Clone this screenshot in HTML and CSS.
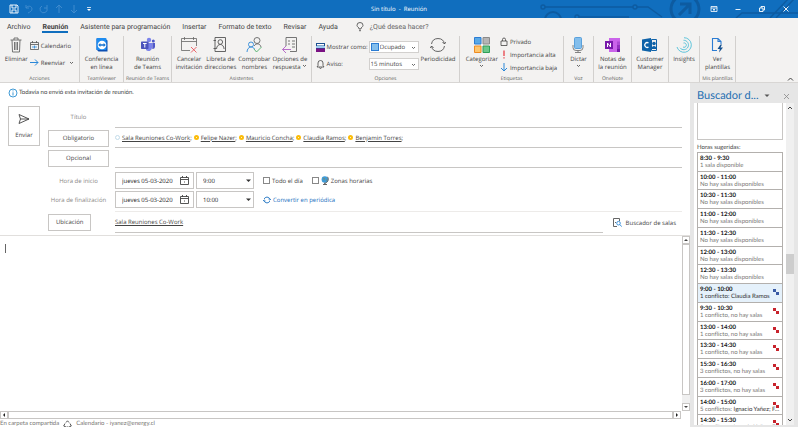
FILE: index.html
```html
<!DOCTYPE html>
<html lang="es">
<head>
  <meta charset="UTF-8">
  <title>Sin título - Reunión</title>
  <link rel="stylesheet" href="styles.css">
</head>
<body>
  <header class="titlebar">
    <svg class="circuit" width="268" height="18" viewBox="0 0 268 18" fill="none" stroke="#0b4a85" stroke-width="1.4">
      <circle cx="13" cy="7" r="2"/><path d="M15 7h88M107 7h11l14 10"/><circle cx="105" cy="7" r="2"/>
      <circle cx="23" cy="20" r="8" stroke-width="2"/><circle cx="47" cy="17" r="2"/><path d="M49 17h50"/>
      <circle cx="155" cy="9" r="14" stroke-width="3"/>
      <path d="M149 15l11-11M150 4h10v10" stroke-width="3"/>
      <path d="M206 18l6-5h60M240 18L258-1M246 18L264-1" />
    </svg>
    <div class="quick">
      <button title="Guardar"><svg width="10" height="10" viewBox="0 0 10 10" fill="none" stroke="#fff" stroke-width="0.9"><path d="M1 1h7l1 1v7H1zM3 1v3h4V1M3 9V6h4v3"/></svg></button>
      <button title="Deshacer"><svg width="10" height="10" viewBox="0 0 10 10" fill="none" stroke="#3f8bce"><path d="M2 1v3h3M2 4c2-3 6-2 6 1 0 2-2 3-4 4"/></svg></button>
      <button title="Rehacer"><svg width="10" height="10" viewBox="0 0 10 10" fill="none" stroke="#3f8bce"><path d="M8 1v3H5M8 4a3.6 3.6 0 1 1-5-2"/></svg></button>
      <button title="Anterior"><svg width="10" height="10" viewBox="0 0 10 10" fill="none" stroke="#3f8bce"><path d="M5 9V1M2 4l3-3 3 3"/></svg></button>
      <button title="Siguiente"><svg width="10" height="10" viewBox="0 0 10 10" fill="none" stroke="#3f8bce"><path d="M5 1v8M2 6l3 3 3-3"/></svg></button>
      <button title="Personalizar"><svg width="10" height="10" viewBox="0 0 10 10" fill="#fff"><path d="M3 3h4v.8H3zM3 5h4L5 7z"/></svg></button>
    </div>
    <div class="window-title">Sin título&nbsp; -&nbsp; Reunión</div>
    <div class="window-buttons">
      <button title="Opciones de cinta"><svg width="8" height="8" viewBox="0 0 8 8" fill="none" stroke="#fff" stroke-width="0.8"><path d="M1 1.5h6v5H1zM1 3h6M4 6V4M3 5l1-1 1 1"/></svg></button>
      <button title="Minimizar"><svg width="8" height="8" viewBox="0 0 8 8" stroke="#fff" stroke-width="0.9"><path d="M1.500 4.500h5"/></svg></button>
      <button title="Restaurar"><svg width="8" height="8" viewBox="0 0 8 8" fill="none" stroke="#fff" stroke-width="0.9"><path d="M1.500 3h3.500v3.500H1.500zM3 3V1.500h3.500V5H5"/></svg></button>
      <button title="Cerrar"><svg width="8" height="8" viewBox="0 0 8 8" stroke="#fff" stroke-width="0.9"><path d="M1.500 1.500l5 5M6.500 1.500l-5 5"/></svg></button>
    </div>
  </header>

  <nav class="tabs">
    <button>Archivo</button>
    <button class="active">Reunión</button>
    <button>Asistente para programación</button>
    <button>Insertar</button>
    <button>Formato de texto</button>
    <button>Revisar</button>
    <button>Ayuda</button>
    <button class="tell-me"><svg width="8" height="10" viewBox="0 0 8 10" fill="none" stroke="#444" stroke-width="0.8"><path d="M3 7V6C1.500 5 1 4 1 3.300a3 2.800 0 0 1 6 0C7 4 6.500 5 5 6v1zM3 8.700h2"/></svg>¿Qué desea hacer?</button>
  </nav>

  <section class="ribbon">
    <div class="group g-acciones">
      <div class="tools">
        <button class="big">
          <svg width="16" height="16" viewBox="0 0 16 16" fill="none" stroke="#666" stroke-width="0.9"><path d="M2.500 3h11M6 3V1h4v2M4 3l.5 12h7L12 3M6.500 5v8M8 5v8M9.500 5v8"/></svg>
          <span>Eliminar</span>
        </button>
        <div class="stack">
          <button class="small"><svg width="9" height="9" viewBox="0 0 9 9" fill="none" stroke="#555" stroke-width="0.8"><path d="M.5 1.500h8v7h-8zM.5 3.500h8M2.500 0v2M6.500 0v2"/><path d="M2 6h5M4.500 4.500v3" stroke="#2b88d8"/></svg>Calendario</button>
          <button class="small"><svg width="9" height="9" viewBox="0 0 9 9" fill="none" stroke="#2b88d8"><path d="M0 4.500h8M5 1.500l3 3-3 3"/></svg>Reenviar<svg class="after" width="5" height="5" viewBox="0 0 5 5" fill="none" stroke="#444" stroke-width="0.8"><path d="M1 2l1.500 1.500L4 2"/></svg></button>
        </div>
      </div>
      <div class="group-name">Acciones</div>
    </div>

    <div class="group g-teamviewer">
      <div class="tools">
        <button class="big">
          <svg width="16" height="16" viewBox="0 0 16 16"><path d="M2.500 1.500h8l3 2v11h-9l-2-2z" fill="#0b4fb3"/><rect x="2.500" y="1" width="10" height="12" rx="1" fill="#1e8cf0"/><circle cx="8" cy="8" r="4.300" fill="#fff"/><path d="M4.200 8l2.200-2v1.300h3.200V6l2.200 2-2.200 2V8.700H6.400V10z" fill="#1573d1"/></svg>
          <span>Conferencia<br>en línea</span>
        </button>
      </div>
      <div class="group-name">TeamViewer</div>
    </div>

    <div class="group g-teams">
      <div class="tools">
        <button class="big">
          <svg width="16" height="16" viewBox="0 0 16 16"><circle cx="9" cy="3" r="2.200" fill="#7b83eb"/><circle cx="13.300" cy="4" r="1.500" fill="#5059c9"/><path d="M6 6h6v5a3.500 3.500 0 0 1-6 2z" fill="#7b83eb"/><path d="M12.300 6H15v4a2.500 2.500 0 0 1-2.700 2z" fill="#5059c9"/><rect x="1" y="4.500" width="7.500" height="7.500" rx=".7" fill="#4b53bc"/><path d="M3 6.500h3.600M4.800 6.500v4" stroke="#fff" fill="none"/></svg>
          <span>Reunión<br>de Teams</span>
        </button>
      </div>
      <div class="group-name">Reunión de Teams</div>
    </div>

    <div class="group g-asistentes">
      <div class="tools">
        <button class="big">
          <svg width="16" height="16" viewBox="0 0 16 16" fill="none" stroke="#666" stroke-width="0.8"><path d="M9 13.500H.5v-12h15V9M.5 4.500h15M3.500 0v3M12.500 0v3"/><path d="M10 10l5.500 5.500M15.500 10L10 15.500" stroke="#e8424b"/></svg>
          <span>Cancelar<br>invitación</span>
        </button>
        <button class="big">
          <svg width="16" height="16" viewBox="0 0 16 16" fill="none" stroke="#555" stroke-width="0.9"><path d="M3 .5h10.500v14H3zM1.500 3.500H4M1.500 11.500H4"/><circle cx="8.300" cy="5" r="2.300"/><path d="M4.500 12c.3-6 7.300-6 7.600 0"/></svg>
          <span>Libreta de<br>direcciones</span>
        </button>
        <button class="big">
          <svg width="16" height="16" viewBox="0 0 16 16" fill="none" stroke="#666" stroke-width="0.9"><circle cx="11" cy="3.500" r="3"/><path d="M8 9c2-3 6-3 7 1"/><circle cx="5" cy="7.500" r="2.500" stroke="#2b88d8"/><path d="M1 15c.3-6 6-6 7.500-3" stroke="#2b88d8"/><path d="M8 12l2.500 3L15.500 10" stroke="#4caf6a"/></svg>
          <span>Comprobar<br>nombres</span>
        </button>
        <button class="big">
          <svg width="16" height="16" viewBox="0 0 16 16" fill="none" stroke="#666" stroke-width="0.9"><path d="M4 9V.5h10.500v14H8"/><path d="M6 4h2M6 7h2M10 4h3M10 7h3M10 10h3"/><path d="M9 12.500H.5M4 9l-3.500 3.500L4 16" stroke="#b05fc4"/></svg>
          <span>Opciones de<br>respuesta <svg width="5" height="5" viewBox="0 0 5 5" fill="none" stroke="#444" stroke-width="0.8"><path d="M1 1l1.500 1.500L4 1"/></svg></span>
        </button>
      </div>
      <div class="group-name">Asistentes</div>
    </div>

    <div class="group g-opciones">
      <div class="tools">
        <div class="stack">
          <div class="option">
            <svg width="9" height="9" viewBox="0 0 9 9"><path d="M0 0h9v9H0z" fill="#1b4f8f"/><path d="M1 1h7v1.500H1z" fill="#fff"/><path d="M0 3h9v2H0z" fill="#9ccbf0"/><path d="M0 5.500h9V9H0z" fill="#7a1283"/></svg>
            <label for="showAs">Mostrar como:</label>
            <span class="combo with-swatch"><i class="swatch"></i><select id="showAs"><option>Ocupado</option></select><svg width="5" height="5" viewBox="0 0 5 5" fill="none" stroke="#444" stroke-width="0.8"><path d="M1 2l1.500 1.500L4 2"/></svg></span>
          </div>
          <div class="option">
            <svg width="9" height="9" viewBox="0 0 9 9" fill="none" stroke="#444" stroke-width="0.8"><path d="M1 7h7L7 5.500V3a2.500 2.500 0 0 0-5 0v2.500zM3.500 7.500c0 1.300 2 1.300 2 0"/></svg>
            <label for="reminder">Aviso:</label>
            <span class="combo"><select id="reminder"><option>15 minutos</option></select><svg width="5" height="5" viewBox="0 0 5 5" fill="none" stroke="#444" stroke-width="0.8"><path d="M1 2l1.500 1.500L4 2"/></svg></span>
          </div>
        </div>
        <button class="big">
          <svg width="16" height="16" viewBox="0 0 16 16" fill="none" stroke="#555" stroke-width="0.9"><path d="M1.500 7a6.600 6.600 0 0 1 13 0M14.500 9a6.600 6.600 0 0 1-13 0M12.500 5l2 2L16 5M0 11l1.600-2 2 2"/></svg>
          <span>Periodicidad</span>
        </button>
      </div>
      <div class="group-name">Opciones</div>
    </div>

    <div class="group g-etiquetas">
      <div class="tools">
        <button class="big">
          <svg width="16" height="16" viewBox="0 0 16 16"><path d="M.5.500h6.500v6.500h-6.500z" fill="#5aa9e6" stroke="#2b7cd3"/><path d="M9 .500h6.500v6.500H9z" fill="#b5b5b5" stroke="#8a8a8a"/><path d="M.5 9h6.500v6.500h-6.500z" fill="#ffc66d" stroke="#ed8b22"/><path d="M9 9h6.500v6.500H9z" fill="#6cc88a" stroke="#2f9e57"/></svg>
          <span>Categorizar<br><svg width="5" height="5" viewBox="0 0 5 5" fill="none" stroke="#444" stroke-width="0.8"><path d="M1 1l1.500 1.500L4 1"/></svg></span>
        </button>
        <div class="stack tight">
          <button class="small"><svg width="8" height="9" viewBox="0 0 8 9" fill="none" stroke="#444" stroke-width="0.8"><path d="M1 4h6v4.500H1zM2.500 4V2.500a1.500 1.500 0 0 1 3 0V4"/></svg>Privado</button>
          <button class="small"><svg width="8" height="9" viewBox="0 0 8 9" stroke="#e8424b" stroke-width="1.300"><path d="M4 .5v5.500M4 7.200v1.300"/></svg>Importancia alta</button>
          <button class="small"><svg width="8" height="9" viewBox="0 0 8 9" fill="none" stroke="#2b88d8"><path d="M4 0v8M1 5l3 3 3-3"/></svg>Importancia baja</button>
        </div>
      </div>
      <div class="group-name">Etiquetas</div>
    </div>

    <div class="group g-voz">
      <div class="tools">
        <button class="big">
          <svg width="16" height="16" viewBox="0 0 16 16" fill="none" stroke="#777" stroke-width="0.9"><path d="M3 8v2.500a3 3 0 0 0 3 3h4a3 3 0 0 0 3-3V8M8 13.500v2M5 15.500h6"/><rect x="4.500" y=".5" width="7" height="11" rx="1" fill="#83beec" stroke="#4f9bd9"/></svg>
          <span>Dictar<br><svg width="5" height="5" viewBox="0 0 5 5" fill="none" stroke="#444" stroke-width="0.8"><path d="M1 1l1.500 1.500L4 1"/></svg></span>
        </button>
      </div>
      <div class="group-name">Voz</div>
    </div>

    <div class="group g-onenote">
      <div class="tools">
        <button class="big">
          <svg width="16" height="16" viewBox="0 0 16 16"><path d="M4 1h11v14H4z" fill="#ca64ea"/><path d="M12 4.500h3V8h-3z" fill="#ae4bd5"/><path d="M12 8h3v3.500h-3z" fill="#9332bf"/><path d="M12 11.500h3V15h-3z" fill="#7719aa"/><rect x="0" y="4" width="8" height="8" fill="#7719aa"/><path d="M2.500 10V6l3 4V6" stroke="#fff" fill="none"/></svg>
          <span>Notas de<br>la reunión</span>
        </button>
      </div>
      <div class="group-name">OneNote</div>
    </div>

    <div class="group g-customer">
      <div class="tools">
        <button class="big">
          <svg width="16" height="16" viewBox="0 0 16 16"><path d="M0 2.500L9 1v14l-9-1.500z" fill="#0f62a8"/><path d="M6.500 6a2.400 2.400 0 1 0 0 4" stroke="#fff" stroke-width="1.300" fill="none"/><path d="M9.500 2.500h5v11h-5z" fill="none" stroke="#0f62a8"/><circle cx="12" cy="6.500" r="1.800" fill="#0f62a8"/><path d="M9.500 12c0-4 5-4 5 0z" fill="#0f62a8"/></svg>
          <span>Customer<br>Manager</span>
        </button>
      </div>
    </div>

    <div class="group g-insights">
      <div class="tools">
        <button class="big">
          <svg width="16" height="16" viewBox="0 0 16 16" fill="none" stroke="#4fc0d8" stroke-width="0.900"><path d="M8 .7a7.300 7.300 0 1 1-7 9.300M7.500 3.300a4.700 4.700 0 1 1-3.500 7.500M7.500 6a2.200 2.200 0 1 1-.5 4"/></svg>
          <span>Insights</span>
        </button>
      </div>
    </div>

    <div class="group g-plantillas">
      <div class="tools">
        <button class="big">
          <svg width="16" height="16" viewBox="0 0 16 16" fill="none" stroke="#2b7cd3" stroke-width="1.100"><path d="M8 13.500H3.500v-12H9l3 3V7M9 1.500v3h3"/><path d="M11.500 7.500L8.500 12h2.300l-.8 3.500 4-5h-2.500l1.500-3z" fill="#14508f" stroke="none"/></svg>
          <span>Ver<br>plantillas</span>
        </button>
      </div>
      <div class="group-name">Mis plantillas</div>
    </div>
    <button class="collapse" title="Contraer"><svg width="7" height="6" viewBox="0 0 7 6" fill="none" stroke="#444"><path d="M1 4.500L3.500 2 6 4.500"/></svg></button>
  </section>

  <main class="workspace">
    <section class="compose">
      <div class="notice">
        <svg width="10" height="10" viewBox="0 0 10 10" fill="none" stroke="#2b8fd0" stroke-width="0.9"><circle cx="5" cy="5" r="4"/><path d="M5 4.300V7.500M5 2.400v1"/></svg>
        Todavía no envió esta invitación de reunión.
      </div>

      <form class="invite">
        <button type="button" class="send">
          <svg width="12" height="12" viewBox="0 0 12 12" fill="none" stroke="#444" stroke-width="0.900"><path d="M1 1.500L11 6 1 10.500 2.500 6zM2.500 6H11"/></svg>
          Enviar
        </button>
        <div class="fields">
          <div class="row title-row">
            <label for="subject">Título</label>
            <input class="line" id="subject" type="text">
          </div>
          <div class="row people-row">
            <button type="button" class="field-button">Obligatorio</button>
            <div class="line people">
              <i class="presence unknown"></i><span><a href="#">Sala Reuniones Co-Work</a>;</span>
              <i class="presence"></i><span><a href="#">Felipe Nazer</a>;</span>
              <i class="presence"></i><span><a href="#">Mauricio Concha</a>;</span>
              <i class="presence"></i><span><a href="#">Claudia Ramos</a>;</span>
              <i class="presence"></i><span><a href="#">Benjamin Torres</a>;</span>
            </div>
          </div>
          <div class="row people-row">
            <button type="button" class="field-button">Opcional</button>
            <input class="line" type="text" aria-label="Opcional">
          </div>
          <div class="dates">
            <div class="row">
              <label for="startDate">Hora de inicio</label>
              <div class="when">
                <span class="date"><input id="startDate" type="text" value="jueves 05-03-2020"><svg width="9" height="9" viewBox="0 0 9 9" fill="none" stroke="#444" stroke-width="0.9"><path d="M.5 1.500h8v7h-8zM.5 3.500h8M2.500 0v2M6.500 0v2M4 6h1"/></svg></span>
                <span class="combo time"><select aria-label="Hora de inicio"><option>9:00</option></select><svg width="5" height="5" viewBox="0 0 5 5" fill="#333"><path d="M0 1.500h5L2.500 4z"/></svg></span>
                <label class="check"><input type="checkbox">Todo el día</label>
                <label class="check"><input type="checkbox"><svg width="8" height="9" viewBox="0 0 8 9"><circle cx="3.800" cy="3.500" r="3.200" fill="#3f9bd8"/><path d="M2 1.500l2 1-1 2zM5 3l1 1-1 1.500z" fill="#7a8a70"/><path d="M6.500.8c2 3 0 6.200-3.500 6.500M4 7v1.500M2 8.500h4" fill="none" stroke="#555" stroke-width="0.9"/></svg>Zonas horarias</label>
              </div>
            </div>
            <div class="row">
              <label for="endDate">Hora de finalización</label>
              <div class="when">
                <span class="date"><input id="endDate" type="text" value="jueves 05-03-2020"><svg width="9" height="9" viewBox="0 0 9 9" fill="none" stroke="#444" stroke-width="0.9"><path d="M.5 1.500h8v7h-8zM.5 3.500h8M2.500 0v2M6.500 0v2M4 6h1"/></svg></span>
                <span class="combo time"><select aria-label="Hora de finalización"><option>10:00</option></select><svg width="5" height="5" viewBox="0 0 5 5" fill="#333"><path d="M0 1.500h5L2.500 4z"/></svg></span>
                <a class="recurring" href="#"><svg width="8" height="8" viewBox="0 0 8 8" fill="none" stroke="#1a6fc0" stroke-width="0.900"><path d="M1.200 3a3 3 0 0 1 5.600 0M6.800 5a3 3 0 0 1-5.600 0M5.500 3l1.300 1L8 3M0 5l1.200-1 1.300 1"/></svg>Convertir en periódica</a>
              </div>
            </div>
          </div>
          <div class="row place-row">
            <div class="place-label"><button type="button" class="field-button">Ubicación</button></div>
            <div class="place">
              <div class="line place-value"><a href="#">Sala Reuniones Co-Work</a></div>
              <button type="button" class="room-finder"><svg width="9" height="9" viewBox="0 0 9 9" fill="none" stroke="#555" stroke-width="0.9"><path d="M4 8.500H.5v-8h6V3M2.500 4v1"/><g stroke="#2b88d8"><circle cx="5.500" cy="5.200" r="1.800"/><path d="M6.800 6.500L8.800 8.700"/></g></svg>Buscador de salas</button>
            </div>
          </div>
        </div>
      </form>

      <div class="editor">
        <span class="caret"></span>
        <textarea aria-label="Mensaje"></textarea>
        <div class="scroll-v">
          <button title="Arriba"><svg width="4" height="4" viewBox="0 0 4 4" fill="#444"><path d="M0 3h4L2 1z"/></svg></button>
          <div class="thumb"></div>
          <div class="track"></div>
          <button title="Abajo"><svg width="4" height="4" viewBox="0 0 4 4" fill="#444"><path d="M0 1h4L2 3z"/></svg></button>
        </div>
      </div>
      <div class="scroll-h">
        <button title="Izquierda"><svg width="4" height="4" viewBox="0 0 4 4" fill="#222"><path d="M3 0v4L1 2z"/></svg></button>
        <div class="thumb"></div>
        <button title="Derecha"><svg width="4" height="4" viewBox="0 0 4 4" fill="#222"><path d="M1 0v4l2-2z"/></svg></button>
      </div>
      <footer class="status">
        <span>En carpeta compartida</span>
        <svg width="9" height="8" viewBox="0 0 9 8" fill="none" stroke="#555"><path d="M3 2.500L4.500.800 6 2.500M7 3.500L8.300 6 6 7M3 7L.7 6 2 3.500M3.500 7h2"/></svg>
        <span>Calendario - iyanez@energy.cl</span>
      </footer>
    </section>

    <aside class="finder">
      <div class="finder-head">
        <h2>Buscador d...</h2>
        <button title="Opciones"><svg width="6" height="4" viewBox="0 0 6 4" fill="#555"><path d="M.5.500h5L3 3z"/></svg></button>
        <button class="close" title="Cerrar"><svg width="7" height="7" viewBox="0 0 7 7" stroke="#888" stroke-width="0.8"><path d="M1 1l5 5M6 1L1 6"/></svg></button>
      </div>
      <div class="finder-body">
        <div class="finder-content">
          <div class="room-list"></div>
          <p>Horas sugeridas:</p>
          <ul class="slots">
            <li><b>8:30 - 9:30</b><span>1 sala disponible</span></li>
            <li><b>10:00 - 11:00</b><span>No hay salas disponibles</span></li>
            <li><b>10:30 - 11:30</b><span>No hay salas disponibles</span></li>
            <li><b>11:00 - 12:00</b><span>No hay salas disponibles</span></li>
            <li><b>11:30 - 12:30</b><span>No hay salas disponibles</span></li>
            <li><b>12:00 - 13:00</b><span>No hay salas disponibles</span></li>
            <li><b>12:30 - 13:30</b><span>No hay salas disponibles</span></li>
            <li class="conflict selected"><b>9:00 - 10:00</b><span>1 conflicto: Claudia Ramos</span></li>
            <li class="conflict"><b>9:30 - 10:30</b><span>1 conflicto, no hay salas</span></li>
            <li class="conflict"><b>13:00 - 14:00</b><span>1 conflicto, no hay salas</span></li>
            <li class="conflict"><b>13:30 - 14:30</b><span>1 conflicto, no hay salas</span></li>
            <li class="conflict"><b>15:30 - 16:30</b><span>3 conflictos, no hay salas</span></li>
            <li class="conflict"><b>16:00 - 17:00</b><span>3 conflictos, no hay salas</span></li>
            <li class="conflict"><b>14:00 - 15:00</b><span>5 conflictos: <em>Ignacio Yañez; F...</em></span></li>
            <li class="conflict"><b>14:30 - 15:30</b><span>5 conflictos: <em>Ignacio Yañez; F...</em></span></li>
          </ul>
        </div>
        <div class="finder-scroll">
          <svg width="6" height="5" viewBox="0 0 6 5" fill="none" stroke="#444"><path d="M1 4l2-2 2 2"/></svg>
          <div class="thumb"></div>
          <svg width="6" height="5" viewBox="0 0 6 5" fill="none" stroke="#444"><path d="M1 1l2 2 2-2"/></svg>
        </div>
      </div>
    </aside>
  </main>
</body>
</html>
```
FILE: styles.css
```css
* {
  box-sizing: border-box;
}

body {
  margin: 0;
  height: 100vh;
  display: flex;
  flex-direction: column;
  overflow: hidden;
  font-family: "Open Sans", "Noto Sans", sans-serif;
  font-size: 6px;
  line-height: 8px;
  text-rendering: geometricPrecision;
  color: #444;
  background: #fff;
}

button, input, select, textarea {
  font: inherit;
  color: inherit;
  background: none;
  border: none;
  border-radius: 0;
  margin: 0;
  padding: 0;
  outline: none;
  text-rendering: inherit;
}

button {
  white-space: nowrap;
}

select {
  appearance: none;
}

svg {
  display: block;
  flex: none;
}

/* title bar */
.titlebar {
  position: relative;
  display: grid;
  grid-template-columns: 1fr auto 1fr;
  align-items: center;
  height: 18px;
  flex: none;
  background: #106ebe;
  color: #fff;
}

.circuit {
  position: absolute;
  top: 0;
  right: 0;
  opacity: 0.5;
}

.quick {
  display: flex;
  gap: 5px;
  padding-left: 9px;
}

.window-buttons {
  position: relative;
  display: flex;
  justify-content: flex-end;
  gap: 16px;
  padding-right: 8px;
}

/* tabs */
.tabs {
  display: flex;
  align-items: flex-end;
  gap: 12px;
  height: 16px;
  flex: none;
  padding: 0 7px 1px;
  background: #f3f2f1;
  font-family: Roboto, sans-serif;
  font-size: 7px;
}

.tabs button {
  height: 12px;
  padding-top: 2px;
  border-bottom: 2px solid transparent;
}

.tabs .active {
  font-weight: 700;
  border-color: #106ebe;
}

.tabs .tell-me {
  display: flex;
  align-items: center;
  gap: 6px;
  padding-left: 6px;
  color: #666;
}

/* ribbon */
.ribbon {
  display: flex;
  height: 49px;
  flex: none;
  padding: 2px 0 0;
  background: #f3f2f1;
  border-bottom: 1px solid #d8d6d4;
}

.group {
  flex: none;
  display: flex;
  flex-direction: column;
  justify-content: space-between;
  border-right: 1px solid #d2d0ce;
}

.g-acciones { width: 80px; }
.g-teamviewer { width: 44px; }
.g-teams { width: 48px; }
.g-asistentes { width: 140px; }
.g-opciones { width: 148px; }
.g-etiquetas { width: 104px; }
.g-voz { width: 30px; }
.g-onenote { width: 38px; }
.g-customer { width: 37px; }
.g-insights { width: 31px; }
.g-plantillas { width: 36px; }

.tools {
  display: flex;
  justify-content: center;
  align-items: flex-start;
  gap: 2px;
}

.group-name {
  padding-top: 1px;
  text-align: center;
  white-space: nowrap;
  font-size: 5px;
  line-height: 6px;
  color: #605e5c;
}

.big {
  display: flex;
  flex-direction: column;
  align-items: center;
  gap: 2px;
  padding-top: 1px;
}

.big span svg {
  display: inline-block;
}

.stack {
  display: flex;
  flex-direction: column;
  gap: 8px;
  padding-top: 5px;
}

.stack.tight {
  gap: 4px;
  padding-top: 1px;
}

.small {
  display: flex;
  align-items: center;
  gap: 2px;
  height: 9px;
}

.small .after {
  margin-left: 2px;
}

.option {
  display: grid;
  grid-template-columns: 9px 40px 50px;
  align-items: center;
  column-gap: 2px;
  height: 9px;
  white-space: nowrap;
}

.combo {
  display: grid;
  grid-template-columns: 1fr 5px;
  align-items: center;
  height: 12px;
  padding: 0 2px 0 1px;
  background: #fff;
  border: 1px solid #d2d0ce;
}

.combo.with-swatch {
  grid-template-columns: 9px 1fr 5px;
}

.swatch {
  width: 8px;
  height: 8px;
  background: #83beec;
  border: 1px solid #2b7cd3;
}

.collapse {
  align-self: flex-end;
  margin-left: auto;
  padding-right: 4px;
}

/* compose area */
.workspace {
  flex: 1;
  min-height: 0;
  display: flex;
}

.compose {
  flex: 1;
  min-width: 0;
  display: flex;
  flex-direction: column;
}

.notice {
  display: flex;
  align-items: center;
  gap: 1px;
  height: 20px;
  padding: 0 8px;
  font-family: Lato, sans-serif;
}

.invite {
  display: flex;
  align-items: flex-start;
  gap: 8px;
  padding: 3px 8px 2px;
  border-bottom: 1px solid #e1dfdd;
}

.send {
  display: flex;
  flex-direction: column;
  align-items: center;
  justify-content: center;
  gap: 6px;
  width: 32px;
  height: 40px;
  border: 1px solid #c8c6c4;
}

.fields {
  flex: 1;
  min-width: 0;
}

.row {
  display: grid;
  grid-template-columns: 61px 1fr;
  column-gap: 6px;
  align-items: center;
}

.row > label {
  text-align: center;
  white-space: nowrap;
  color: #8a8886;
}

.field-button {
  height: 17px;
  padding: 0 7px;
  border: 1px solid #c8c6c4;
}

.line {
  align-self: stretch;
  min-width: 0;
  border-bottom: 1px solid #c8c6c4;
}

.title-row {
  height: 22px;
}

.people-row {
  height: 20px;
}

.people {
  display: flex;
  align-items: center;
  gap: 2px;
}

.people a,
.place-value a {
  color: inherit;
}

.presence {
  width: 5px;
  height: 5px;
  border: 2px solid #fbbc09;
  border-radius: 50%;
}

.presence.unknown {
  border: 1px solid #c3dcea;
}

.dates {
  display: grid;
  gap: 2px;
  padding: 4px 0 3px;
}

.when {
  display: flex;
  align-items: center;
}

.date {
  display: flex;
  align-items: center;
  width: 79px;
  height: 17px;
  padding: 0 4px 0 6px;
  margin-right: 2px;
  border: 1px solid #c8c6c4;
  color: #222;
}

.date input {
  flex: 1;
  min-width: 0;
}

.time {
  width: 58px;
  height: 17px;
  padding-left: 6px;
  margin-right: 9px;
  border-color: #c8c6c4;
  color: #222;
}

.check {
  display: flex;
  align-items: center;
  gap: 2px;
  margin-right: 9px;
}

.check input {
  appearance: none;
  width: 7px;
  height: 7px;
  border: 1px solid #888;
}

.recurring {
  display: flex;
  align-items: center;
  gap: 2px;
  color: #1a6fc0;
  text-decoration: none;
}

.place {
  display: flex;
  align-items: center;
  gap: 10px;
  height: 22px;
  border-top: 1px solid #edebe9;
}

.place-value {
  flex: 1;
  display: flex;
  align-items: center;
}

.room-finder {
  display: flex;
  align-items: center;
  gap: 4px;
  padding-right: 6px;
}

.editor {
  flex: 1;
  min-height: 0;
  display: flex;
}

.caret {
  width: 1px;
  height: 9px;
  margin: 8px 0 0 5px;
  background: #666;
}

.editor textarea {
  flex: 1;
  padding: 8px 0;
  resize: none;
}

.scroll-v {
  display: flex;
  flex-direction: column;
  width: 8px;
}

.scroll-v button,
.scroll-h button {
  display: flex;
  align-items: center;
  justify-content: center;
  flex: none;
  width: 8px;
  height: 8px;
  border: 1px solid #c8c6c4;
}

.scroll-v .thumb,
.scroll-h .thumb {
  flex: 1;
  border: 1px solid #c8c6c4;
}

.scroll-v .track {
  height: 8px;
  background: #f0f0f0;
}

.scroll-h {
  display: flex;
  height: 8px;
  flex: none;
  margin-right: 9px;
}

.status {
  display: flex;
  align-items: center;
  gap: 4px;
  height: 8px;
  flex: none;
  padding-top: 1px;
  font-family: Lato, sans-serif;
  color: #797775;
}

/* room finder pane */
.finder {
  display: flex;
  flex-direction: column;
  width: 108px;
  padding: 0 4px 2px;
  background: #e6e6e6;
  font-family: Lato, sans-serif;
}

.finder-head {
  display: flex;
  align-items: center;
  gap: 5px;
  height: 20px;
  flex: none;
  padding: 6px 4px 0 3px;
}

.finder-head h2 {
  margin: 0;
  font-size: 11px;
  line-height: 14px;
  font-weight: 400;
  color: #1f6fb2;
}

.finder-head .close {
  margin-left: auto;
}

.finder-body {
  flex: 1;
  min-height: 0;
  display: flex;
}

.finder-content {
  flex: 1;
  min-width: 0;
  overflow: hidden;
  padding: 0 3px;
  background: #fff;
}

.room-list {
  height: 37px;
  border: 1px solid #c8c6c4;
  border-top: none;
}

.finder-content p {
  margin: 4px 0 0;
}

.slots {
  display: grid;
  grid-template-rows: repeat(15, 1fr);
  height: 283px;
  margin: 0;
  padding: 0;
  list-style: none;
  border: 1px solid #b3b0ad;
}

.slots li {
  position: relative;
  min-height: 0;
  padding: 2px 0 0 2px;
  line-height: 7px;
  white-space: nowrap;
  border-bottom: 1px solid #b3b0ad;
}

.slots b,
.slots span {
  display: block;
}

.slots b {
  color: #111;
}

.slots span {
  color: #797775;
}

.slots em {
  font-style: normal;
  color: #333;
}

.slots .selected {
  background: #e5f1fb;
}

.slots .selected span {
  color: #333;
}

/* two linked squares on slots with a conflict */
.conflict::before,
.conflict::after {
  content: "";
  position: absolute;
  top: 5px;
  right: 6px;
  width: 3px;
  height: 3px;
  background: #c8232c;
}

.conflict::after {
  top: 8px;
  right: 3px;
}

.selected::before,
.selected::after {
  background: #3b5ba5;
}

.finder-scroll {
  display: flex;
  flex-direction: column;
  align-items: center;
  justify-content: space-between;
  width: 8px;
  padding: 2px 0;
  background: #f0f0f0;
}

.finder-scroll .thumb {
  width: 8px;
  height: 20px;
  background: #cdcdcd;
}
```
